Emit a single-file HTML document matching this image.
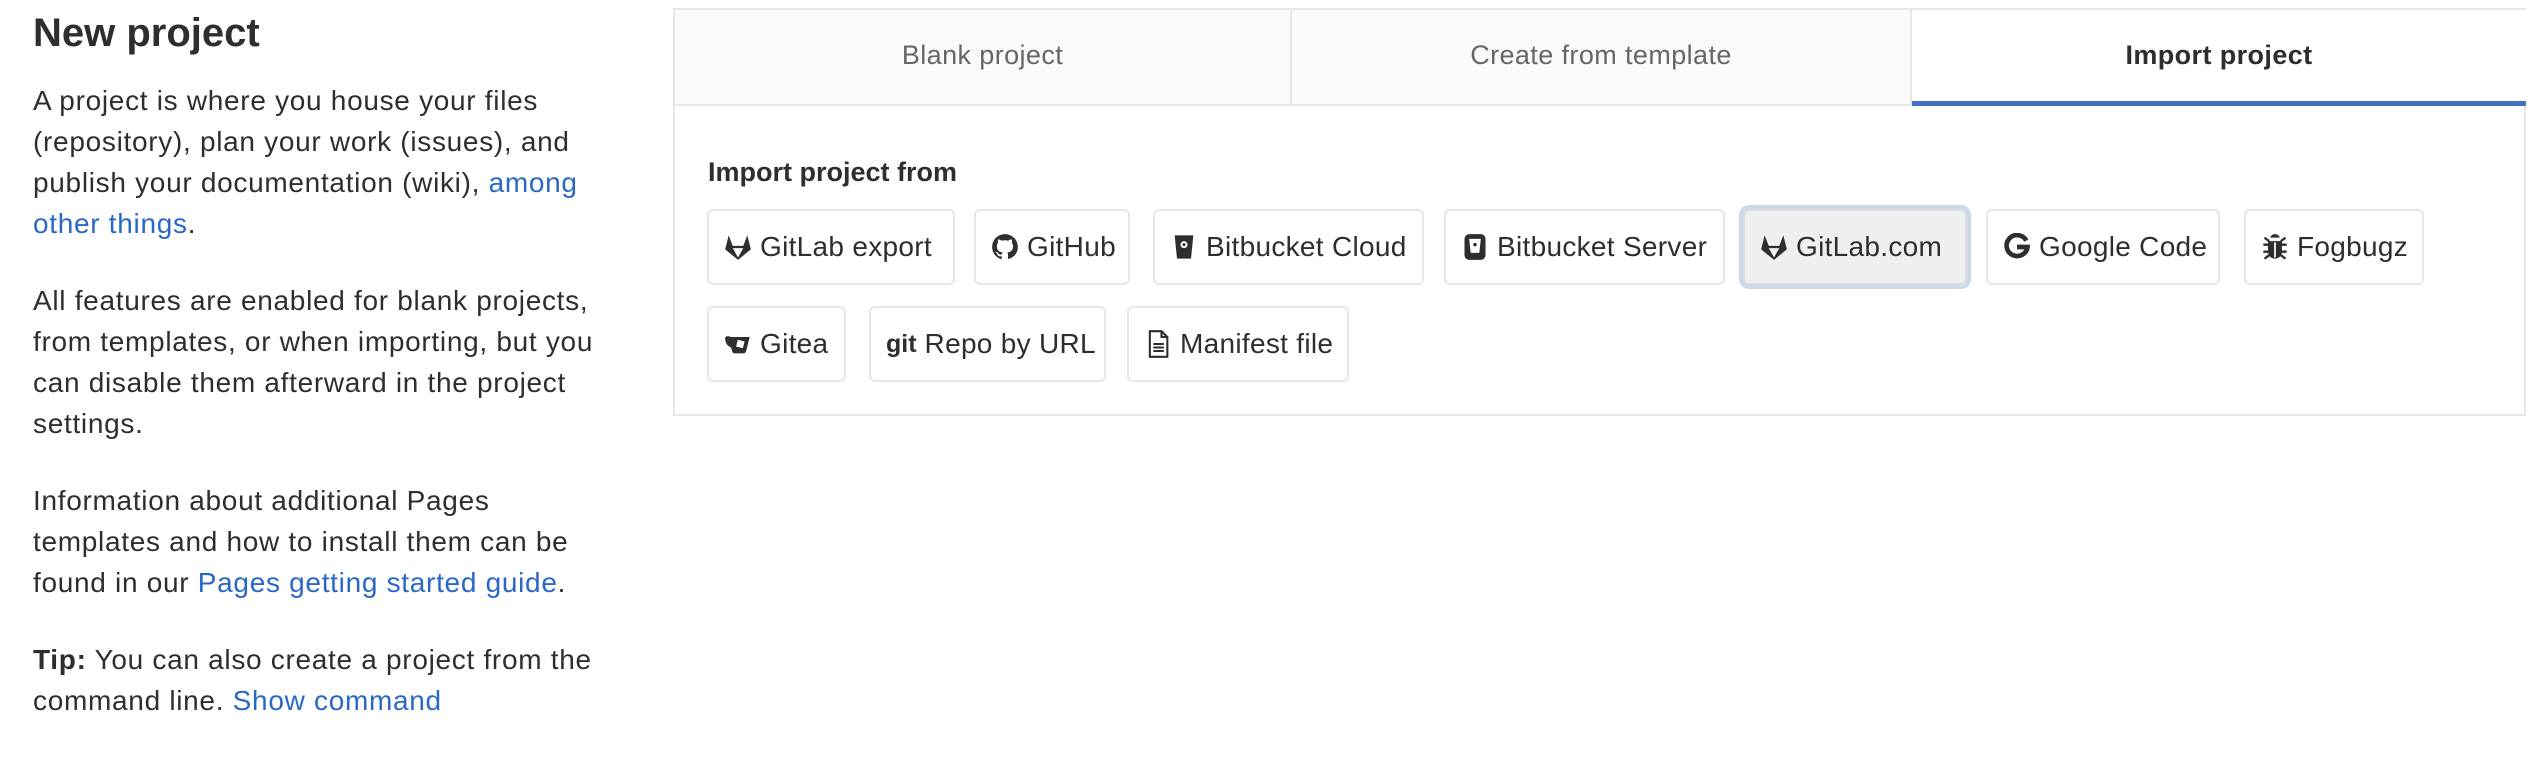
<!DOCTYPE html>
<html><head><meta charset="utf-8"><style>
*{box-sizing:border-box;margin:0;padding:0}
body{width:2542px;height:734px;background:#fff;font-family:"Liberation Sans",Arial,sans-serif;color:#2e2e2e;position:relative;overflow:hidden}
h1{position:absolute;left:33px;top:9px;font-size:40px;line-height:48px;font-weight:bold;color:#2e2e2e}
.side{position:absolute;left:33px;top:80px;width:640px;font-size:28px;line-height:41px;letter-spacing:0.7px;color:#2e2e2e}
.side p{margin-bottom:36px;white-space:nowrap}
a{color:#2a68c6;text-decoration:none}
.panel{position:absolute;left:673px;top:8px;width:1853px;height:408px;border:2px solid #e6e6e6;background:#fff}
.tabs{position:absolute;left:0;top:0;width:100%;height:96px;border-bottom:2px solid #e6e6e6;background:#fafafa}
.tab{position:absolute;top:0;height:94px;line-height:90px;text-align:center;font-size:27px;color:#666;letter-spacing:0.4px}
.t1{left:0;width:617px;border-right:2px solid #e6e6e6}
.t2{left:617px;width:620px;border-right:2px solid #e6e6e6}
.t3{left:1237px;width:614px;background:#fff;color:#2e2e2e;font-weight:bold;border-bottom:5px solid #4470c4;height:96px}
.lbl{position:absolute;left:33px;top:147px;font-size:27px;font-weight:bold;color:#2e2e2e}
.btn{position:absolute;height:76px;border:2px solid #e6e6e6;border-radius:6px;background:#fff;font-size:28px;letter-spacing:0.3px;color:#2e2e2e;display:flex;align-items:center;padding-left:15px;white-space:nowrap}
.btn svg{width:28px;height:28px;margin-right:8px;flex:none}
.focus{background:#efefef;border:2px solid #dcdcdc;box-shadow:0 0 0 4px #cbd8ea}
</style></head><body>
<h1>New project</h1>
<div class="side">
<p>A project is where you house your files<br>(repository), plan your work (issues), and<br>publish your documentation (wiki), <a>among</a><br><a>other things</a>.</p>
<p>All features are enabled for blank projects,<br>from templates, or when importing, but you<br>can disable them afterward in the project<br>settings.</p>
<p>Information about additional Pages<br>templates and how to install them can be<br>found in our <a>Pages getting started guide</a>.</p>
<p><b>Tip:</b> You can also create a project from the<br>command line. <a>Show command</a></p>
</div>
<div class="panel">
<div class="tabs">
<div class="tab t1">Blank project</div>
<div class="tab t2">Create from template</div>
<div class="tab t3">Import project</div>
</div>
<div class="lbl">Import project from</div>

<div class="btn" style="left:32px;top:199px;width:248px"><svg viewBox="0 0 24 24"><path fill="#2e2e2e" d="M12 23L1 14 4 2l3.5 9h9L20 2l3 12z M12 21l-4.5-8h9z" fill-rule="evenodd"/></svg>GitLab export</div>
<div class="btn" style="left:299px;top:199px;width:156px"><svg viewBox="0 0 24 24"><path fill="#2e2e2e" d="M12 1C5.9 1 1 5.9 1 12c0 4.9 3.2 9 7.5 10.4.5.1.7-.2.7-.5v-2c-3 .7-3.7-1.4-3.7-1.4-.5-1.3-1.2-1.6-1.2-1.6-1-.7.1-.7.1-.7 1.1.1 1.7 1.1 1.7 1.1 1 1.7 2.6 1.2 3.2.9.1-.7.4-1.2.7-1.500-2.4-.3-5-1.2-5-5.4 0-1.2.4-2.2 1.1-2.9-.1-.3-.5-1.4.1-2.9 0 0 .9-.3 3 1.1a10 10 0 015.500 0c2.1-1.4 3-1.1 3-1.1.6 1.5.2 2.6.1 2.9.7.8 1.1 1.7 1.1 2.9 0 4.2-2.6 5.1-5 5.4.4.3.7 1 .7 2v3c0 .3.2.6.8.5C19.8 21 23 16.9 23 12 23 5.9 18.1 1 12 1z"/></svg>GitHub</div>
<div class="btn" style="left:478px;top:199px;width:271px"><svg viewBox="0 0 24 24"><path fill="#2e2e2e" d="M4 2h16l-2 20H6z"/><circle cx="12" cy="10" r="3" fill="#fff"/><circle cx="12" cy="10" r="1.3" fill="#2e2e2e"/></svg>Bitbucket Cloud</div>
<div class="btn" style="left:769px;top:199px;width:281px"><svg viewBox="0 0 24 24"><rect x="3" y="1" width="18" height="22" rx="4" fill="#2e2e2e"/><path fill="#fff" d="M7 5h10l-1.3 12H8.3z"/><circle cx="12" cy="10" r="1.5" fill="#2e2e2e"/></svg>Bitbucket Server</div>
<div class="btn focus" style="left:1068px;top:199px;width:224px"><svg viewBox="0 0 24 24"><path fill="#2e2e2e" d="M12 23L1 14 4 2l3.5 9h9L20 2l3 12z M12 21l-4.5-8h9z" fill-rule="evenodd"/></svg>GitLab.com</div>
<div class="btn" style="left:1311px;top:199px;width:234px"><svg viewBox="0 0 24 24"><path fill="none" stroke="#2e2e2e" stroke-width="4" d="M20 6.5A9 9 0 1021 12h-9"/></svg>Google Code</div>
<div class="btn" style="left:1569px;top:199px;width:180px"><svg viewBox="0 0 24 24"><path fill="#2e2e2e" d="M8 4a4 3 0 018 0zM6 7h12v9a6 6 0 01-12 0z"/><path stroke="#2e2e2e" stroke-width="2" d="M2 10h4M18 10h4M2 16h4M18 16h4M3 22l4-3M21 22l-4-3M3 4l4 3M21 4l-4 3"/><path stroke="#fff" stroke-width="1.5" d="M12 8v13"/></svg>Fogbugz</div>

<div class="btn" style="left:32px;top:296px;width:139px"><svg viewBox="0 0 24 24"><path fill="#2e2e2e" d="M1 7c0-2 3-2 5-1h16l-3 12c-.3 1-1 2-2 2H9c-1 0-2-1-2-2l-1-3C3 14 1 11 1 7z"/><rect x="11" y="9" width="6" height="6" fill="#fff" transform="rotate(15 14 12)"/></svg>Gitea</div>
<div class="btn" style="left:194px;top:296px;width:237px"><span style="font-weight:bold;font-size:25px;margin-right:8px;letter-spacing:0">git</span>Repo by URL</div>
<div class="btn" style="left:452px;top:296px;width:222px"><svg viewBox="0 0 24 24"><path fill="none" stroke="#2e2e2e" stroke-width="1.8" d="M5 1h10l5 5v17H5z M15 1v5h5 M8 12h9M8 15h9M8 18h9"/></svg>Manifest file</div>
</div>
</body></html>
